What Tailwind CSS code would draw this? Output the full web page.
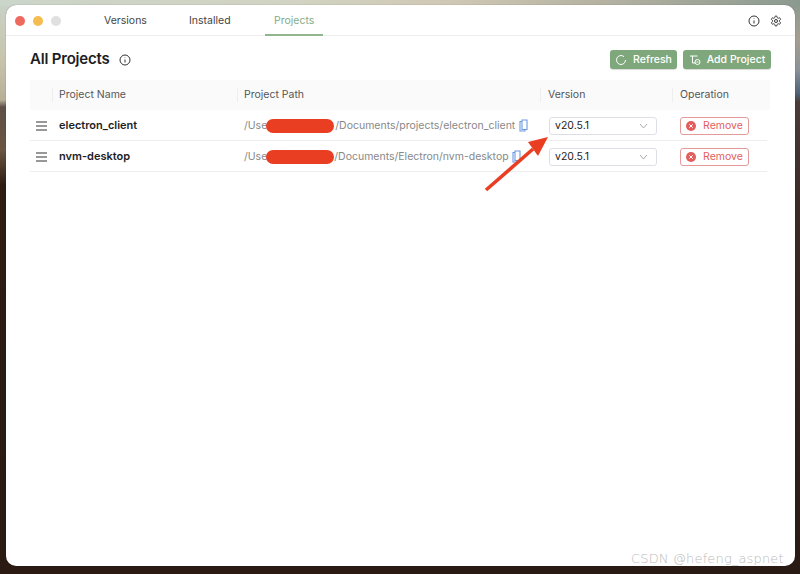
<!DOCTYPE html>
<html><head><meta charset="utf-8"><script src="https://cdn.jsdelivr.net/npm/@tailwindcss/browser@4"></script></head>
<body class="w-[800px] h-[574px] overflow-hidden font-['Inter','Liberation_Sans',sans-serif]">
<div class="relative w-[800px] h-[574px] pt-[5px] pl-[6px] overflow-hidden">
  <div class="absolute inset-0 flex">
    <div class="w-[400px] h-full bg-[linear-gradient(to_bottom,#c9d3c7_0px,#c7c4ab_60px,#b7b096_100px,#5f5048_107px,#6b5540_150px,#2e1c12_185px,#2a1a12_574px)]"></div>
    <div class="w-[400px] h-full bg-[linear-gradient(to_bottom,#8b9a8f_0px,#a59d90_40px,#8a9198_70px,#4f6378_93px,#4a3c3a_102px,#3c2a26_200px,#2a1a14_574px)]"></div>
  </div>
  <div class="absolute inset-x-0 top-0 h-[6px] bg-[linear-gradient(to_right,#cbd5c9_0px,#d2d3c2_300px,#cfc8b4_450px,#b5b2a2_600px,#8b9a8f_800px)]"></div>
  <div class="relative w-[789px] h-[561px] bg-white rounded-[10px] shadow-[0_0_1px_rgba(0,0,0,0.5)] flex flex-col">
    <header class="h-[31px] pt-[1px] border-b border-[#eeeeee] flex items-center shrink-0">
      <div class="flex gap-[8px] pl-[9px] w-[98px] shrink-0">
        <span class="w-[10px] h-[10px] rounded-full bg-[#ee6a5f]"></span>
        <span class="w-[10px] h-[10px] rounded-full bg-[#f5bd4f]"></span>
        <span class="w-[10px] h-[10px] rounded-full bg-[#e0e0e0]"></span>
      </div>
      <nav class="flex text-[10.5px] text-[#444] h-full items-center">
        <span class="w-[85px]">Versions</span>
        <span class="w-[85px]">Installed</span>
        <span class="relative text-[#86ad83] h-full flex items-center">Projects<span class="absolute left-[-9px] w-[58px] bottom-[-1px] h-[2px] bg-[#8fb68c]"></span></span>
      </nav>
      <div class="ml-auto flex items-center gap-[10px] pr-[13px] text-[#333]">
        <svg class="w-[12px] h-[12px]" viewBox="0 0 24 24" fill="none" stroke="currentColor" stroke-width="2"><circle cx="12" cy="12" r="10"/><path d="M12 11v6M12 7v1"/></svg>
        <svg class="w-[12px] h-[12px]" viewBox="0 0 24 24" fill="none" stroke="currentColor" stroke-width="2"><path d="M12.220 2h-.44a2 2 0 0 0-2 2v.18a2 2 0 0 1-1 1.730l-.43.25a2 2 0 0 1-2 0l-.15-.08a2 2 0 0 0-2.730.73l-.22.38a2 2 0 0 0 .73 2.730l.15.1a2 2 0 0 1 1 1.720v.51a2 2 0 0 1-1 1.740l-.15.09a2 2 0 0 0-.73 2.730l.22.38a2 2 0 0 0 2.730.73l.15-.08a2 2 0 0 1 2 0l.43.25a2 2 0 0 1 1 1.730V20a2 2 0 0 0 2 2h.44a2 2 0 0 0 2-2v-.18a2 2 0 0 1 1-1.730l.43-.25a2 2 0 0 1 2 0l.15.08a2 2 0 0 0 2.730-.73l.22-.39a2 2 0 0 0-.73-2.730l-.15-.08a2 2 0 0 1-1-1.740v-.5a2 2 0 0 1 1-1.740l.15-.09a2 2 0 0 0 .73-2.730l-.22-.38a2 2 0 0 0-2.730-.73l-.15.08a2 2 0 0 1-2 0l-.43-.25a2 2 0 0 1-1-1.730V4a2 2 0 0 0-2-2z"/><circle cx="12" cy="12" r="3"/></svg>
      </div>
    </header>
    <main class="flex-1 pl-[24px]">
      <div class="flex items-center justify-between h-[44px] pt-[3px] w-[741px]">
        <div class="flex items-center">
          <h1 class="text-[15px] font-semibold text-[#1d1d1f] tracking-[-0.2px]">All Projects</h1>
          <svg class="ml-[9px] w-[12px] h-[12px] text-[#333]" viewBox="0 0 24 24" fill="none" stroke="currentColor" stroke-width="2"><circle cx="12" cy="12" r="10"/><path d="M12 11v6M12 7v1"/></svg>
        </div>
        <div class="flex gap-[6px]">
          <button class="h-[19px] w-[67px] rounded-[3px] bg-[#7fa77c] text-white text-[10.5px] font-medium flex items-center justify-center gap-[6px] shadow-[0_1px_1px_rgba(0,0,0,0.15)]">
            <svg class="w-[12px] h-[12px]" viewBox="0 0 24 24" fill="none" stroke="currentColor" stroke-width="2"><path d="M21 12a9 9 0 1 1-3-6.700"/></svg>
            Refresh
          </button>
          <button class="h-[19px] w-[88px] rounded-[3px] bg-[#7fa77c] text-white text-[10.5px] font-medium flex items-center justify-center gap-[6px] shadow-[0_1px_1px_rgba(0,0,0,0.15)]">
            <svg class="w-[12px] h-[12px]" viewBox="0 0 24 24" fill="none" stroke="currentColor" stroke-width="2"><path d="M2 4h15M7 4v14h5"/><circle cx="17" cy="16" r="5"/><path d="M15 16h4"/></svg>
            Add Project
          </button>
        </div>
      </div>
      <div class="w-[740px] text-[10.5px]">
        <div class="flex h-[30px] items-center bg-[#fafafa] text-[#555]">
          <div class="w-[23px] h-[14px] border-r border-[#eee]"></div>
          <div class="w-[185px] pl-[6px] h-[14px] border-r border-[#eee] flex items-center">Project Name</div>
          <div class="w-[303px] pl-[6px] h-[14px] border-r border-[#eee] flex items-center">Project Path</div>
          <div class="w-[132px] pl-[7px] h-[14px] border-r border-[#eee] flex items-center">Version</div>
          <div class="pl-[7px] h-[14px] flex items-center">Operation</div>
        </div>
        <div class="w-[737px] flex h-[31px] pt-[1px] items-center border-b border-[#eee]">
          <div class="w-[23px] flex pl-[6px]"><svg class="w-[11px] h-[10px] text-[#333]" viewBox="0 0 11 10" fill="none" stroke="currentColor" stroke-width="1.100"><path d="M0 1h11M0 5h11M0 9h11"/></svg></div>
          <div class="w-[185px] pl-[6px] text-[11px] font-semibold text-[#1d1d1f]">electron_client</div>
          <div class="w-[303px] pl-[6px] flex items-center text-[#888] relative whitespace-nowrap">
            <span>/Use</span><span class="absolute left-[28px] w-[68px] h-[14px] rounded-full bg-[#ea3e23]"></span><span class="ml-[68px]">/Documents/projects/electron_client</span>
            <svg class="ml-[4px] w-[9px] h-[13px] text-[#6b9ae0]" viewBox="0 0 9 13" fill="none" stroke="currentColor" stroke-width="1.100"><path d="M3 1h5v9.500H3zM3 2.500H1v9.500h5v-1.500"/></svg>
          </div>
          <div class="w-[132px] pl-[8px]">
            <div class="w-[108px] h-[18px] rounded-[3px] border border-[#dcdfe6] flex items-center justify-between pl-[5px] pr-[8px] text-[#222]">v20.5.1<svg class="w-[9px] h-[6px] text-[#aaa]" viewBox="0 0 9 6" fill="none" stroke="currentColor"><path d="M1 1l3.500 4L8 1"/></svg></div>
          </div>
          <div class="pl-[7px]">
            <button class="w-[69px] h-[18px] rounded-[3px] border border-[#e59a9a] text-[#e35d5d] flex items-center justify-center gap-[7px]"><svg class="w-[10px] h-[10px]" viewBox="0 0 10 10"><circle cx="5" cy="5" r="5" fill="currentColor"/><path d="M3.300 3.300l3.400 3.400M6.700 3.300l-3.400 3.400" stroke="#fff"/></svg>Remove</button>
          </div>
        </div>
        <div class="w-[737px] flex h-[31px] pt-[1px] items-center border-b border-[#eee]">
          <div class="w-[23px] flex pl-[6px]"><svg class="w-[11px] h-[10px] text-[#333]" viewBox="0 0 11 10" fill="none" stroke="currentColor" stroke-width="1.100"><path d="M0 1h11M0 5h11M0 9h11"/></svg></div>
          <div class="w-[185px] pl-[6px] text-[11px] font-semibold text-[#1d1d1f]">nvm-desktop</div>
          <div class="w-[303px] pl-[6px] flex items-center text-[#888] relative whitespace-nowrap">
            <span>/Use</span><span class="absolute left-[28px] w-[68px] h-[14px] rounded-full bg-[#ea3e23]"></span><span class="ml-[67px]">/Documents/Electron/nvm-desktop</span>
            <svg class="ml-[3px] w-[9px] h-[13px] text-[#6b9ae0]" viewBox="0 0 9 13" fill="none" stroke="currentColor" stroke-width="1.100"><path d="M3 1h5v9.500H3zM3 2.500H1v9.500h5v-1.500"/></svg>
          </div>
          <div class="w-[132px] pl-[8px]">
            <div class="w-[108px] h-[18px] rounded-[3px] border border-[#dcdfe6] flex items-center justify-between pl-[5px] pr-[8px] text-[#222]">v20.5.1<svg class="w-[9px] h-[6px] text-[#aaa]" viewBox="0 0 9 6" fill="none" stroke="currentColor"><path d="M1 1l3.500 4L8 1"/></svg></div>
          </div>
          <div class="pl-[7px]">
            <button class="w-[69px] h-[18px] rounded-[3px] border border-[#e59a9a] text-[#e35d5d] flex items-center justify-center gap-[7px]"><svg class="w-[10px] h-[10px]" viewBox="0 0 10 10"><circle cx="5" cy="5" r="5" fill="currentColor"/><path d="M3.300 3.300l3.400 3.400M6.700 3.300l-3.400 3.400" stroke="#fff"/></svg>Remove</button>
          </div>
        </div>
      </div>
    </main>
  </div>
  <svg class="absolute left-[480px] top-[130px] w-[70px] h-[65px]" viewBox="0 0 70 65" fill="none"><path d="M6 60L53 19" stroke="#ea3e23" stroke-width="3.500"/><path d="M68 7L58 26L48 12z" fill="#ea3e23"/></svg>
  <span class="absolute left-[631px] top-[550px] text-[13px] leading-[18px] text-[#bbbbbb] font-['DejaVu_Sans',sans-serif] font-light whitespace-nowrap tracking-[0.15px]">CSDN @hefeng_aspnet</span>
</div>
</body></html>
